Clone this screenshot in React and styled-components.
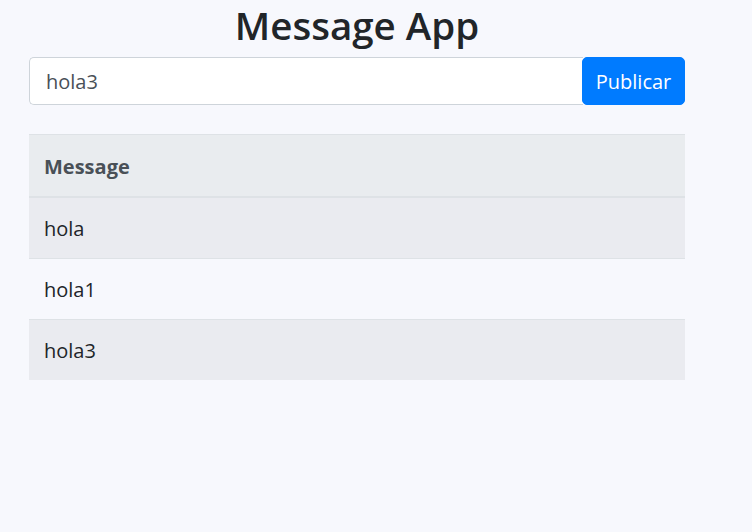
import React from "react";
import styled, { createGlobalStyle } from "styled-components";

const Global = createGlobalStyle`
  html, body { margin: 0; padding: 0; background: #f7f8fd; }
  body {
    font-family: "Open Sans", "Noto Sans", sans-serif;
    font-size: 20px;
    line-height: 1.5;
    color: #212529;
    min-height: 532px;
  }
  * { box-sizing: border-box; }
`;

const Page = styled.div`
  padding-left: 29px;
`;

const Container = styled.div`
  width: 656px;
  display: flex;
  flex-direction: column;
`;

const Title = styled.h1`
  margin: 0 0 9px;
  height: 48px;
  font-size: 38.5px;
  font-weight: 600;
  line-height: 50px;
  text-align: center;
  color: #212529;
`;

const InputGroup = styled.form`
  display: flex;
  margin: 0;
`;

const Input = styled.input`
  flex: 1;
  height: 48px;
  padding: 7px 16px;
  font-family: inherit;
  font-size: 20px;
  color: #495057;
  background: #fff;
  border: 1px solid #ced4da;
  border-right: none;
  border-radius: 5px 0 0 5px;
  outline: none;
`;

const Button = styled.button`
  height: 48px;
  width: 103px;
  padding: 0;
  font-family: inherit;
  font-size: 20px;
  color: #fff;
  background: #007bff;
  border: 1px solid #007bff;
  border-radius: 5px;
  margin-left: -1px;
  cursor: pointer;
`;

const Table = styled.table`
  margin-top: 29px;
  width: 100%;
  border-collapse: collapse;
`;

const HeadCell = styled.th`
  text-align: left;
  padding: 17px 15px 13px;
  height: 62px;
  font-weight: 700;
  color: #495057;
  background: #e9ecef;
  border-top: 1px solid #dee2e6;
  border-bottom: 2px solid #dee2e6;
`;

const Row = styled.tr`
  background: ${(p) => (p.$striped ? "rgba(0,0,0,0.05)" : "transparent")};
`;

const Cell = styled.td`
  padding: 16px 15px 14px;
  height: 61px;
  border-top: 1px solid #dee2e6;
  color: #212529;
`;

const messages = ["hola", "hola1", "hola3"];

export default function App() {
  return (
    <Page>
      <Global />
      <Container>
        <Title>Message App</Title>
        <InputGroup onSubmit={(e) => e.preventDefault()}>
          <Input defaultValue="hola3" />
          <Button type="submit">Publicar</Button>
        </InputGroup>
        <Table>
          <thead>
            <tr>
              <HeadCell>Message</HeadCell>
            </tr>
          </thead>
          <tbody>
            {messages.map((m, i) => (
              <Row key={i} $striped={i % 2 === 0}>
                <Cell>{m}</Cell>
              </Row>
            ))}
          </tbody>
        </Table>
      </Container>
    </Page>
  );
}
